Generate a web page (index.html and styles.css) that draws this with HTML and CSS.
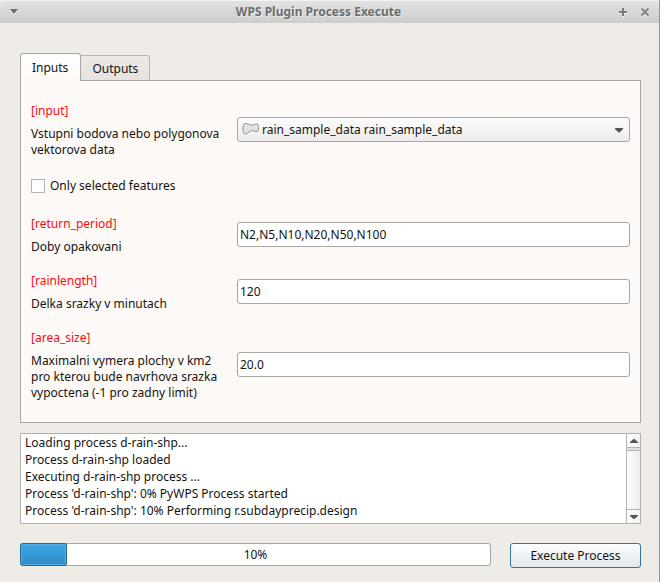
FILE: index.html
```html
<!DOCTYPE html>
<html lang="en">
<head>
<meta charset="utf-8">
<title>WPS Plugin Process Execute</title>
<link rel="stylesheet" href="styles.css">
</head>
<body>
<div class="window">
  <header class="titlebar">
    <button class="title-button" type="button" aria-label="Window menu">
      <svg width="10" height="8" viewBox="0 0 10 8"><path d="M1 2h8L5 7z" fill="#fff"/><path d="M1 1h8L5 6z" fill="#6c6c6c"/></svg>
    </button>
    <h1 class="title">WPS Plugin Process Execute</h1>
    <button class="title-button" type="button" aria-label="Maximize">
      <svg width="10" height="10" viewBox="0 0 10 10"><path d="M1 6h8M5 2v8" stroke="#f4f4f4" stroke-width="2"/><path d="M1 5h8M5 1v8" stroke="#787878" stroke-width="2"/></svg>
    </button>
    <button class="title-button" type="button" aria-label="Close">
      <svg width="10" height="10" viewBox="0 0 10 10"><path d="M1.500 2.500l7 7M8.500 2.500l-7 7" stroke="#f4f4f4" stroke-width="2"/><path d="M1.500 1.500l7 7M8.500 1.500l-7 7" stroke="#808080" stroke-width="2"/></svg>
    </button>
  </header>
  <main class="content">
    <div class="tabs" role="tablist">
      <button class="tab tab-active" type="button" role="tab" aria-selected="true">Inputs</button>
      <button class="tab" type="button" role="tab" aria-selected="false">Outputs</button>
    </div>
    <form class="panel" id="process-form">
      <div class="row">
        <label class="caption" for="layer">
          <span class="name">[input]</span>
          <span>Vstupni bodova nebo polygonova vektorova data</span>
        </label>
        <div class="combo">
          <select class="field combo-select" id="layer">
            <option>rain_sample_data rain_sample_data</option>
          </select>
          <svg class="combo-icon" width="18" height="14" viewBox="0 0 18 14"><path d="M3 1.500C5 1 7 3 9.500 3S13.500 1.500 15 2s1.500 1.500 1.500 3.500 0 3.500-1.500 4-3-1-5-1-4 3-6 3.500S1 10 1 7s0-5 2-5.500z" fill="#e2e2e0" stroke="#929290"/></svg>
          <svg class="combo-arrow" width="8" height="5" viewBox="0 0 8 5"><path d="M0 0h8v1L4.500 4.500h-1L0 1z" fill="#555"/></svg>
        </div>
      </div>
      <div class="check-row">
        <input class="check" id="selected" type="checkbox">
        <label for="selected">Only selected features</label>
      </div>
      <div class="row">
        <label class="caption" for="period">
          <span class="name">[return_period]</span>
          <span>Doby opakovani</span>
        </label>
        <input class="field" id="period" type="text" value="N2,N5,N10,N20,N50,N100">
      </div>
      <div class="row">
        <label class="caption" for="length">
          <span class="name">[rainlength]</span>
          <span>Delka srazky v minutach</span>
        </label>
        <input class="field" id="length" type="text" value="120">
      </div>
      <div class="row">
        <label class="caption" for="area">
          <span class="name">[area_size]</span>
          <span>Maximalni vymera plochy v km2 pro kterou bude navrhova srazka vypoctena (-1 pro zadny limit)</span>
        </label>
        <input class="field" id="area" type="text" value="20.0">
      </div>
    </form>
    <div class="log">
      <textarea class="log-text" rows="5" readonly aria-label="Process log">Loading process d-rain-shp...
Process d-rain-shp loaded
Executing d-rain-shp process ...
Process 'd-rain-shp': 0% PyWPS Process started
Process 'd-rain-shp': 10% Performing r.subdayprecip.design</textarea>
      <div class="scrollbar">
        <button class="scroll-button" type="button" aria-label="Scroll up">
          <svg width="8" height="4" viewBox="0 0 8 4"><path d="M0 4V3L3.500 0h1L8 3v1z" fill="#555"/></svg>
        </button>
        <div class="scroll-track"><div class="scroll-thumb"></div></div>
        <button class="scroll-button" type="button" aria-label="Scroll down">
          <svg width="8" height="4" viewBox="0 0 8 4"><path d="M0 0h8v1L4.500 4h-1L0 1z" fill="#555"/></svg>
        </button>
      </div>
    </div>
    <footer class="actions">
      <div class="progress">
        <progress class="progress-bar" value="10" max="100" aria-label="Progress"></progress>
        <span class="progress-text">10%</span>
      </div>
      <button class="execute" type="submit" form="process-form">Execute Process</button>
    </footer>
  </main>
</div>
</body>
</html>
```
FILE: styles.css
```css
* {
  box-sizing: border-box;
}

body {
  margin: 0;
  background: #efebe7;
  color: #141414;
}

body,
button,
input,
select,
textarea {
  font-family: "Noto Sans", "Open Sans", sans-serif;
  font-size: 12px;
  line-height: 16px;
}

button,
input,
select,
textarea {
  margin: 0;
  color: #141414;
}

svg {
  display: block;
}

.window {
  min-height: 100vh;
  border-right: 1px solid #969696;
}

.titlebar {
  display: flex;
  align-items: center;
  height: 23px;
  padding: 0 3px;
  border-top: 1px solid #f4f4f4;
  border-radius: 4px 4px 0 0;
  background: linear-gradient(#e2e2e2, #cdcdcd);
}

.title {
  flex: 1;
  margin: 0;
  font-size: 12px;
  font-weight: 700;
  line-height: 16px;
  text-align: center;
  color: #6e6e6e;
  text-shadow: 1px 1px 0 #ececec;
}

.title-button {
  display: flex;
  align-items: center;
  justify-content: center;
  width: 22px;
  height: 20px;
  padding: 0;
  border: 0;
  background: none;
}

.content {
  padding: 30px 18px 13px 20px;
}

.tabs {
  display: flex;
  align-items: flex-end;
}

.tab {
  height: 25px;
  padding: 2px 11px 0;
  border: 1px solid #b9b5b3;
  border-width: 1px 1px 0 0;
  border-radius: 0 3px 0 0;
  background: linear-gradient(#ebe8e6, #e6e3e1);
}

.tab-active {
  position: relative;
  height: 28px;
  margin-bottom: -1px;
  padding: 0 12px 0 11px;
  border: 1px solid #a9a5a3;
  border-bottom: 0;
  border-radius: 3px 3px 0 0;
  background: linear-gradient(#fff, #fdf9f6);
}

.panel {
  display: flex;
  flex-direction: column;
  gap: 16px;
  padding: 20px 10px 21px;
  border: 1px solid #a9a5a3;
  background: #fdf9f6;
}

.row {
  display: grid;
  grid-template-columns: 196px 1fr;
  gap: 10px;
  align-items: center;
}

.caption {
  display: flex;
  flex-direction: column;
  gap: 7px;
  padding-top: 2px;
}

.name {
  color: #fe0a10;
}

.field {
  width: 100%;
  height: 25px;
  padding: 0 2px;
  border: 1px solid #aaa6a4;
  border-radius: 3px;
  outline: 0;
  background: #fff;
}

.combo {
  position: relative;
}

.combo-select {
  display: block;
  padding: 0 24px;
  appearance: none;
  background: linear-gradient(#fdfcfc, #eeecea);
}

.combo-icon,
.combo-arrow {
  position: absolute;
  pointer-events: none;
}

.combo-icon {
  top: 5px;
  left: 5px;
}

.combo-arrow {
  top: 11px;
  right: 7px;
}

.check-row {
  display: flex;
  align-items: center;
  gap: 5px;
  padding: 4px 0;
}

.check {
  width: 14px;
  height: 14px;
  appearance: none;
  border: 1px solid #b8b4b2;
  background: #fff;
}

.log {
  display: flex;
  margin-top: 10px;
  border: 1px solid #b4b1af;
  background: #fff;
}

.log-text {
  flex: 1;
  min-width: 0;
  height: 89px;
  padding: 0 4px;
  border: 0;
  outline: 0;
  resize: none;
  overflow: hidden;
  background: transparent;
  line-height: 17px;
}

.scrollbar {
  display: flex;
  flex-direction: column;
  width: 14px;
  border-left: 1px solid #b4b1af;
}

.scroll-button {
  display: flex;
  align-items: center;
  justify-content: center;
  height: 13px;
  padding: 0;
  border: 0;
  background: linear-gradient(to right, #fff, #f3f1f0);
}

.scroll-track {
  flex: 1;
  border-bottom: 1px solid #b4b1af;
  background: linear-gradient(to right, #fdfdfd, #efedeb);
}

.scroll-thumb {
  height: 4px;
  border: 1px solid #b4b1af;
  border-width: 1px 0;
  background: #e3e0de;
}

.actions {
  display: flex;
  align-items: flex-start;
  gap: 19px;
  margin-top: 19px;
}

.progress {
  position: relative;
  flex: 1;
  height: 23px;
  border-radius: 3px;
  background: #fff;
  box-shadow: inset 0 0 0 1px #aaa6a4;
}

.progress-bar {
  display: block;
  width: 100%;
  height: 23px;
  appearance: none;
  border: 0;
  background: transparent;
}

.progress-bar::-webkit-progress-bar {
  background: transparent;
}

.progress-bar::-webkit-progress-value {
  border: 1px solid #21698f;
  border-radius: 3px 2px 2px 3px;
  background: linear-gradient(#3ea7e9, #318bc6);
  box-shadow: inset 0 0 0 1px #54ace2;
}

.progress-text {
  position: absolute;
  inset: 0;
  line-height: 23px;
  text-align: center;
}

.execute {
  width: 131px;
  height: 25px;
  padding: 0;
  border: 1px solid #2c76a4;
  border-radius: 3px;
  background: linear-gradient(#fcfdfd, #e2e7ea);
}
```
